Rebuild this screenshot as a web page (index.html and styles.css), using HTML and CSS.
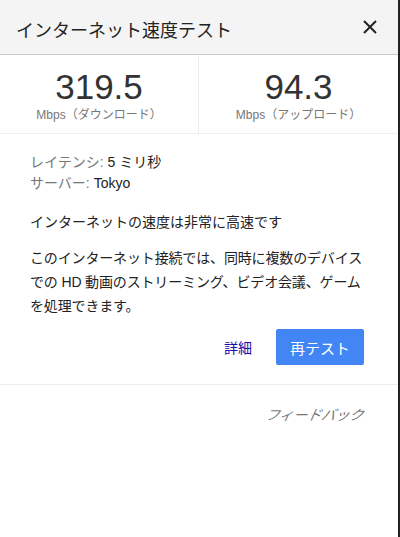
FILE: index.html
```html
<!DOCTYPE html>
<html lang="ja">
<head>
  <meta charset="UTF-8">
  <meta name="viewport" content="width=device-width, initial-scale=1.0">
  <title>インターネット速度テスト</title>
  <link rel="stylesheet" href="styles.css">
</head>
<body>
  <div class="panel">
    <div class="header">
      <h2>インターネット速度テスト</h2>
      <button class="close" aria-label="閉じる">
        <svg width="14" height="14" viewBox="0 0 14 14"><path d="M1 1L13 13M13 1L1 13" stroke="#222" stroke-width="2"/></svg>
      </button>
    </div>

    <div class="stats">
      <div class="stat">
        <div class="num">319.5</div>
        <div class="unit">Mbps（ダウンロード）</div>
      </div>
      <div class="stat">
        <div class="num">94.3</div>
        <div class="unit">Mbps（アップロード）</div>
      </div>
    </div>

    <div class="info">
      <div class="meta"><span class="key">レイテンシ:</span> 5 ミリ秒</div>
      <div class="meta"><span class="key">サーバー:</span> Tokyo</div>
      <p class="verdict">インターネットの速度は非常に高速です</p>
      <p class="desc">このインターネット接続では、同時に複数のデバイスでの HD 動画のストリーミング、ビデオ会議、ゲームを処理できます。</p>
      <div class="actions">
        <a href="#" class="details">詳細</a>
        <button class="retest">再テスト</button>
      </div>
    </div>

    <div class="footer">
      <a href="#">フィードバック</a>
    </div>
  </div>
</body>
</html>
```

FILE: styles.css
```css
body {
  margin: 0;
  font-family: "Liberation Sans", Arial, "Noto Sans CJK JP", sans-serif;
  color: #222;
  background: #fff;
}
.panel {
  width: 398px;
  min-height: 537px;
  border-right: 2px solid #222;
}
.header {
  display: flex;
  align-items: center;
  justify-content: space-between;
  height: 54px;
  padding: 0 21px 0 16px;
  background: #f4f4f4;
  border-bottom: 1px solid #ccc;
}
.header h2 {
  margin: 4px 0 0;
  font-size: 18px;
  font-weight: normal;
  color: #222;
}
.close {
  display: flex;
  padding: 0;
  border: none;
  background: none;
  cursor: pointer;
}
.stats {
  display: flex;
  border-bottom: 1px solid #eee;
}
.stat {
  flex: 1;
  height: 78px;
  display: flex;
  flex-direction: column;
  align-items: center;
  padding-top: 13px;
  box-sizing: border-box;
}
.stat:first-child {
  border-right: 1px solid #eee;
  flex: 0 0 199px;
}
.num {
  font-size: 35px;
  line-height: 38px;
  color: #333;
}
.unit {
  font-size: 12px;
  color: #777;
  margin-top: -1px;
}
.info {
  padding: 18px 34px 19px 30px;
  font-size: 14px;
  border-bottom: 1px solid #eee;
}
.meta {
  line-height: 21px;
}
.key {
  color: #777;
}
.verdict {
  margin: 17px 0 0;
  line-height: 22px;
}
.desc {
  margin: 13px 0 0;
  line-height: 24px;
  letter-spacing: -0.15px;
}
.actions {
  display: flex;
  justify-content: flex-end;
  align-items: center;
  gap: 24px;
  margin-top: 11px;
}
.details {
  color: #1a0dab;
  text-decoration: none;
}
.retest {
  width: 88px;
  height: 36px;
  border: none;
  border-radius: 2px;
  background: #4285f4;
  color: #fff;
  font-family: inherit;
  font-size: 15px;
  cursor: pointer;
}
.footer {
  display: flex;
  justify-content: flex-end;
  padding: 19px 34px;
}
.footer a {
  display: inline-block;
  font-size: 14px;
  font-style: italic;
  transform: skewX(-12deg);
  color: #777;
  text-decoration: none;
}
```
